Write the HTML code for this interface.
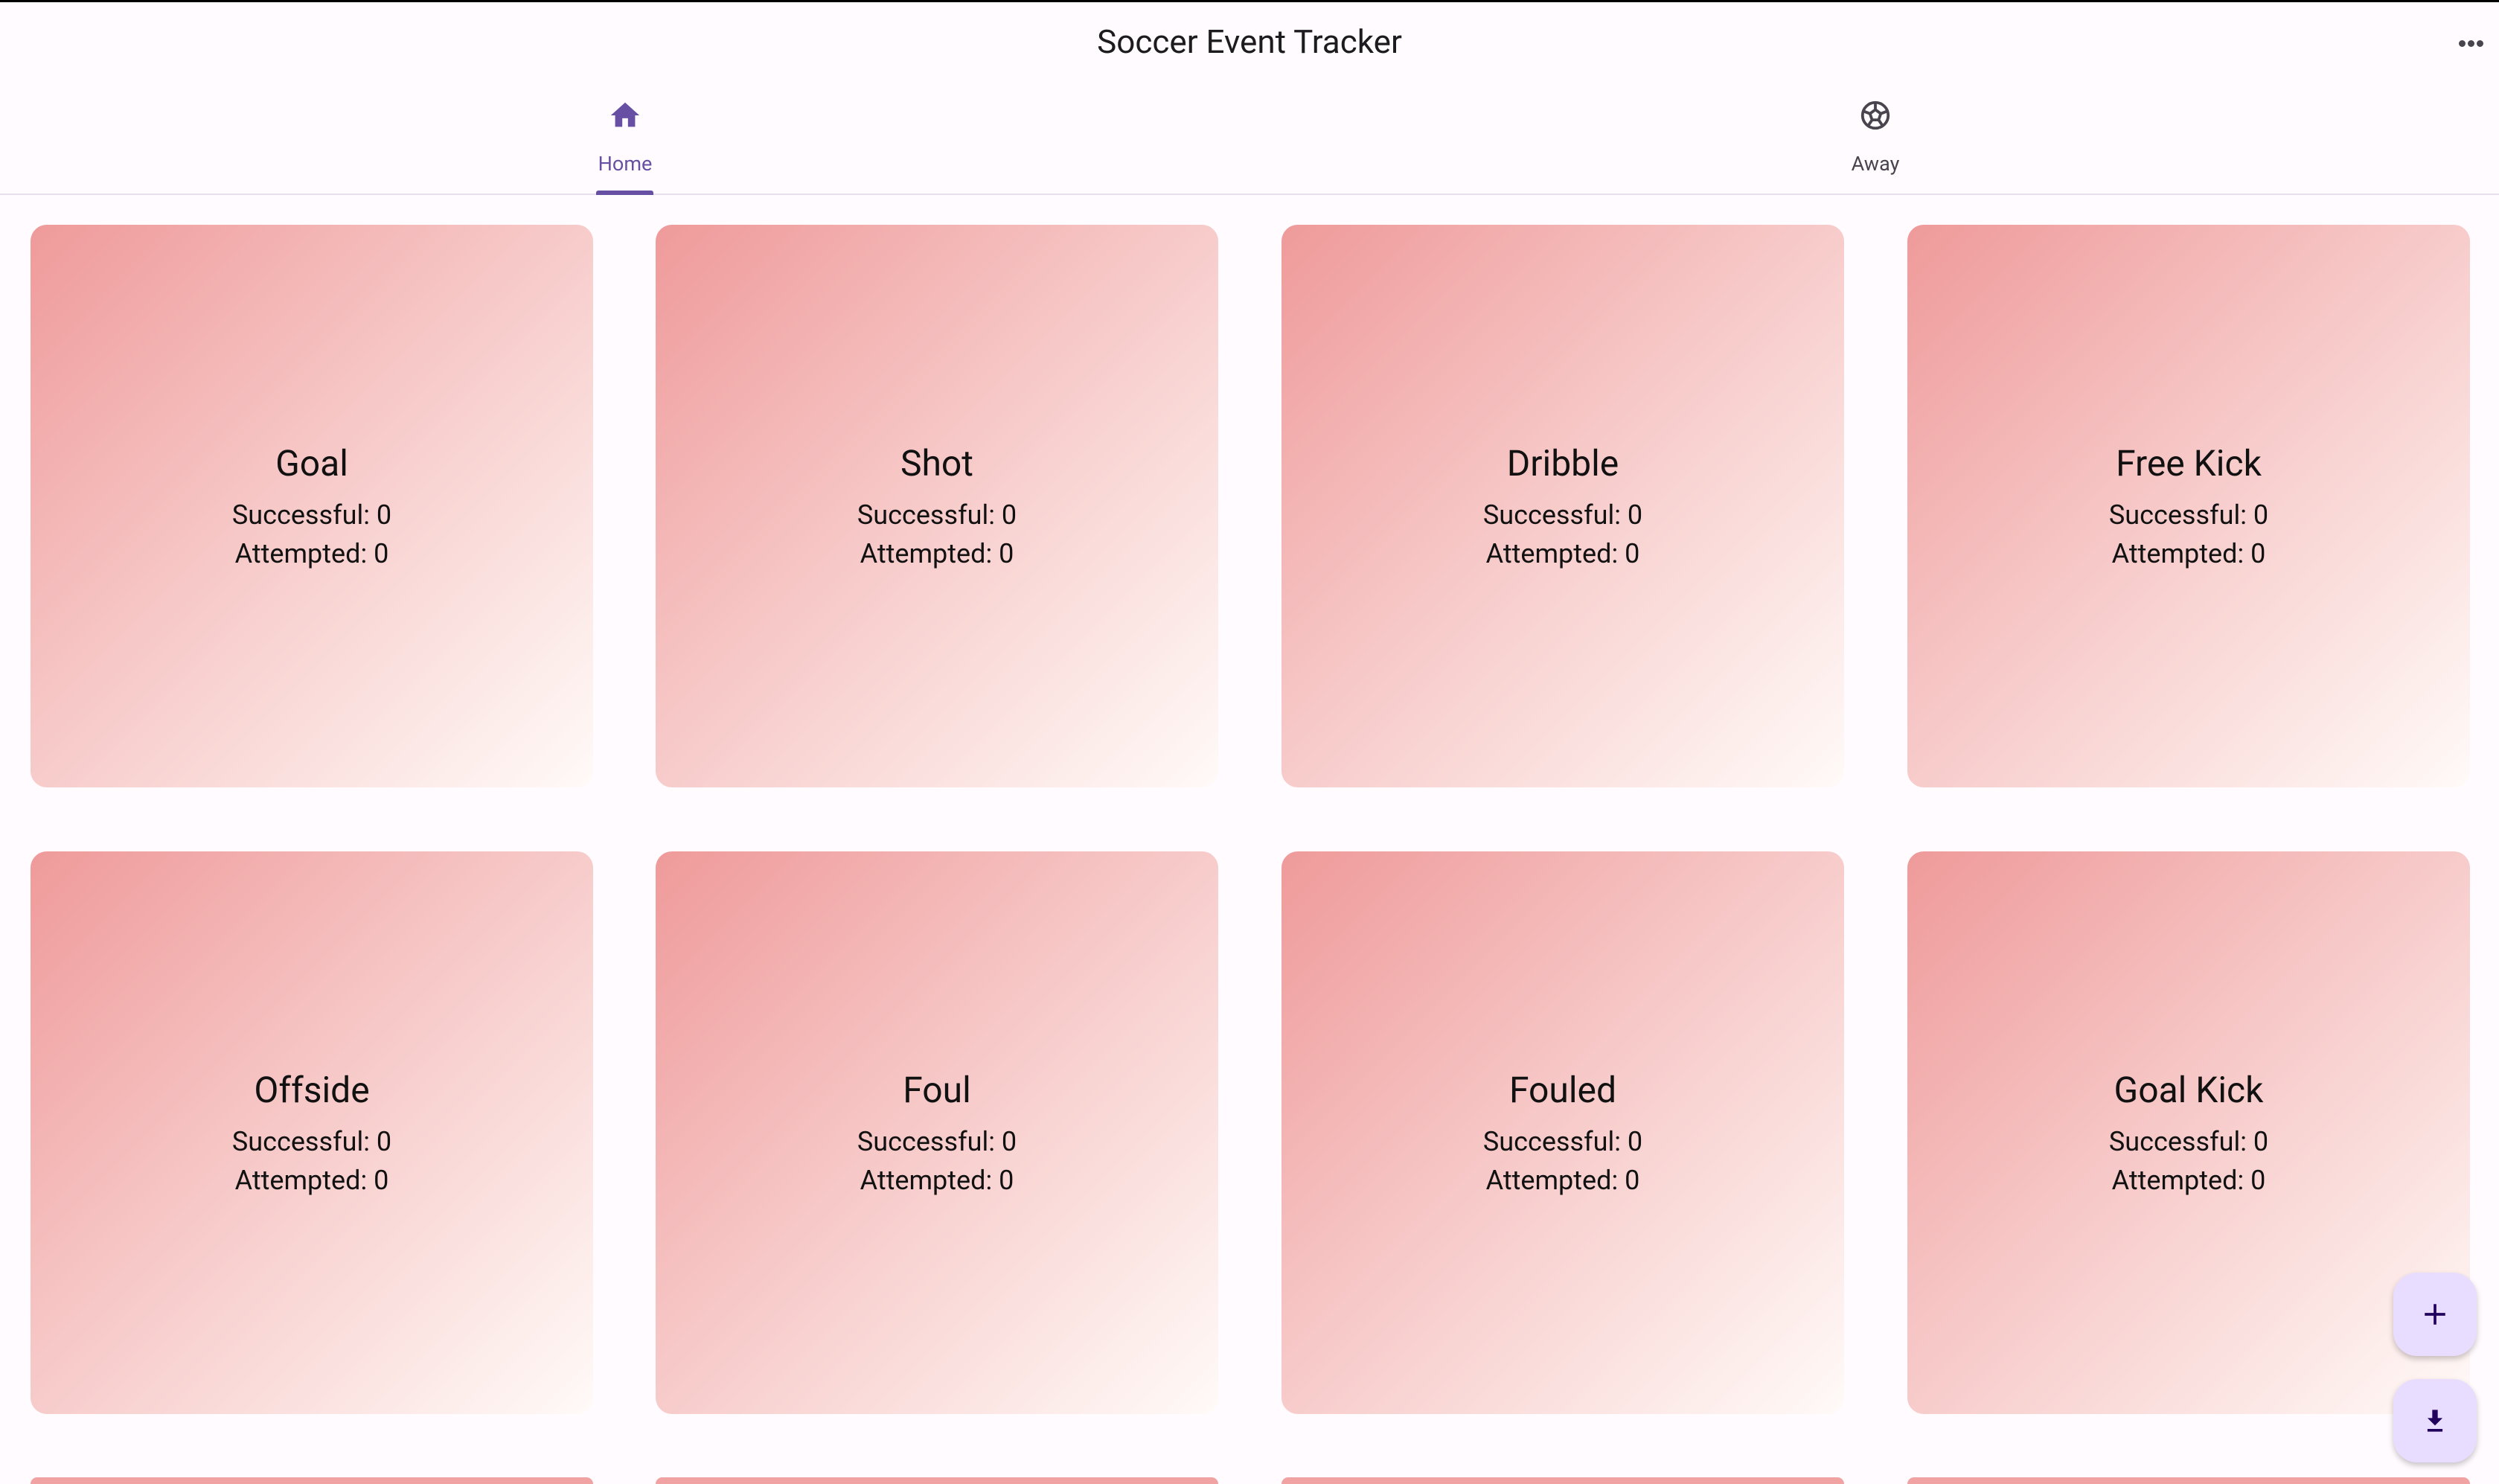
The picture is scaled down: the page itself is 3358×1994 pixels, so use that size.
<!DOCTYPE html>
<html><head><meta charset="utf-8"><style>
*{margin:0;padding:0;box-sizing:border-box}
html{width:3358px;height:1994px;overflow:hidden}
body{width:3358px;height:1994px;background:#fffbfe;position:relative;overflow:hidden;font-family:"Roboto","Liberation Sans",sans-serif;color:#1c1b1f}
.topline{position:absolute;left:0;top:0;width:3358px;height:3px;background:#000}
.title{position:absolute;left:0;width:3358px;top:28px;text-align:center;font-size:44px;line-height:56px;color:#1c1b1f}
.dot{position:absolute;width:9px;height:9px;border-radius:50%;background:#49454f;top:54px}
.tab{position:absolute;width:300px;text-align:center;font-size:27px;top:204px}
.divider{position:absolute;left:0;top:260px;width:3358px;height:2px;background:#e7e0ec}
.ind{position:absolute;left:801px;top:256px;width:77px;height:6px;background:#6750a4;border-radius:3px 3px 0 0}
.card{position:absolute;width:756px;height:756px;border-radius:22px;background:linear-gradient(135deg,#ef9a9a 0%,#f6c7c6 45%,#fbe3e1 75%,#fffaf8 100%);text-align:center}
.card.b{height:9px;border-radius:22px 22px 0 0;background:#f0a3a2}
.card .t{position:absolute;left:0;right:0;top:291px;font-size:48px;line-height:60px;color:#111}
.card .s{position:absolute;left:0;right:0;top:364px;font-size:36px;line-height:52px;color:#111}
.fab{position:absolute;left:3216px;width:112px;height:112px;border-radius:32px;background:#e8ddff;box-shadow:0 4px 8px rgba(0,0,0,.22)}
</style></head><body>
<div class="topline"></div>
<div class="title">Soccer Event Tracker</div>
<div class="dot" style="left:3304px"></div><div class="dot" style="left:3316px"></div><div class="dot" style="left:3328px"></div>
<svg style="position:absolute;left:817px;top:132px" width="46" height="46" viewBox="0 0 24 24"><path d="M10 20v-6h4v6h5v-8h3L12 3 2 12h3v8z" fill="#6750a4"/></svg>
<svg style="position:absolute;left:2497px;top:132px" width="46" height="46" viewBox="0 0 24 24"><circle cx="12" cy="12" r="9" fill="none" stroke="#49454f" stroke-width="2"/><path d="M12 8l3.8 2.8-1.5 4.4H9.7L8.2 10.8z" fill="none" stroke="#49454f" stroke-width="2"/><path d="M12 8V3.5M15.8 10.8l4-1.5M14.3 15.2l2.5 3.7M9.7 15.2l-2.5 3.7M8.2 10.8l-4-1.5" stroke="#49454f" stroke-width="2"/></svg>
<div class="tab" style="left:690px;color:#6750a4">Home</div>
<div class="tab" style="left:2370px;color:#49454f">Away</div>
<div class="divider"></div>
<div class="ind"></div>

<div class="card" style="left:41px;top:302px"><div class="t">Goal</div><div class="s">Successful: 0<br>Attempted: 0</div></div>
<div class="card" style="left:881px;top:302px"><div class="t">Shot</div><div class="s">Successful: 0<br>Attempted: 0</div></div>
<div class="card" style="left:1722px;top:302px"><div class="t">Dribble</div><div class="s">Successful: 0<br>Attempted: 0</div></div>
<div class="card" style="left:2563px;top:302px"><div class="t">Free Kick</div><div class="s">Successful: 0<br>Attempted: 0</div></div>
<div class="card" style="left:41px;top:1144px"><div class="t">Offside</div><div class="s">Successful: 0<br>Attempted: 0</div></div>
<div class="card" style="left:881px;top:1144px"><div class="t">Foul</div><div class="s">Successful: 0<br>Attempted: 0</div></div>
<div class="card" style="left:1722px;top:1144px"><div class="t">Fouled</div><div class="s">Successful: 0<br>Attempted: 0</div></div>
<div class="card" style="left:2563px;top:1144px"><div class="t">Goal Kick</div><div class="s">Successful: 0<br>Attempted: 0</div></div>
<div class="card b" style="left:41px;top:1985px"></div>
<div class="card b" style="left:881px;top:1985px"></div>
<div class="card b" style="left:1722px;top:1985px"></div>
<div class="card b" style="left:2563px;top:1985px"></div>

<div class="fab" style="top:1710px"><svg style="position:absolute;left:34px;top:34px" width="44" height="44" viewBox="0 0 24 24"><path d="M12 4.5v15M4.5 12h15" stroke="#21005d" stroke-width="2"/></svg></div>
<div class="fab" style="top:1853px"><svg style="position:absolute;left:34px;top:34px" width="44" height="44" viewBox="0 0 24 24"><path d="M10 4h4v6h3.5L12 15.5 6.5 10H10zM6.5 18h11v2h-11z" fill="#21005d"/></svg></div>
</body></html>
